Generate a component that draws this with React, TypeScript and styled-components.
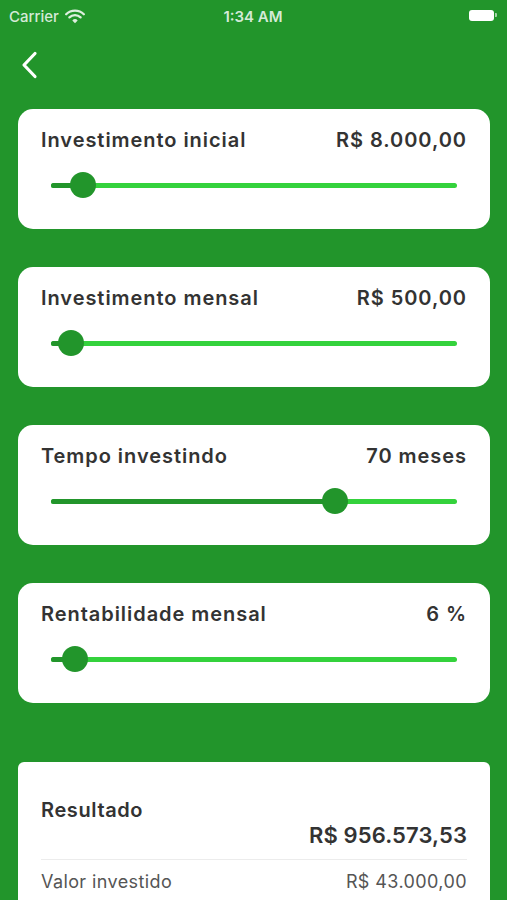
import styled, { createGlobalStyle } from "styled-components";

const GlobalStyle = createGlobalStyle`
    html, body {
        margin: 0;
        padding: 0;
        background: #22952b;
        overflow: hidden;
    }
    * { box-sizing: border-box; }
`

const Screen = styled.div`
    width: 507px;
    height: 900px;
    background-color: #22952b;
    font-family: Inter, "Liberation Sans", sans-serif;
    overflow: hidden;
    display: flex;
    flex-direction: column;
    & > * { flex-shrink: 0; }
`

const StatusBar = styled.div`
    height: 30px;
    padding: 2px 10px 0 9px;
    display: grid;
    grid-template-columns: 1fr auto 1fr;
    align-items: center;
    color: rgba(255,255,255,0.82);
    font-size: 15px;
    font-weight: 500;
`

const Carrier = styled.div`
    display: flex;
    align-items: center;
    gap: 6px;
`

const Clock = styled.div`
    font-weight: 600;
`

const Battery = styled.div`
    justify-self: end;
    display: flex;
    align-items: center;
    gap: 1px;
    margin-top: -2px;
`

const BatteryBody = styled.div`
    width: 25px;
    height: 11px;
    border-radius: 3px;
    background: #ffffff;
`

const BatteryNub = styled.div`
    width: 2px;
    height: 4px;
    border-radius: 0 1px 1px 0;
    background: rgba(255,255,255,0.6);
`

const Header = styled.div`
    height: 79px;
    padding: 21px 0 0 20px;
`

const List = styled.div`
    display: flex;
    flex-direction: column;
    gap: 38px;
    padding: 0 17px 0 18px;
`

const Card = styled.div`
    background: #ffffff;
    border-radius: 15px;
    padding: 19px 23px 30px 23px;
    display: flex;
    flex-direction: column;
    gap: 19px;
`

const Row = styled.div`
    display: flex;
    justify-content: space-between;
    align-items: center;
    height: 24px;
    color: #333333;
    font-size: 20px;
    font-weight: 600;
    letter-spacing: 0.95px;
`

const Track = styled.div`
    position: relative;
    height: 28px;
    margin: 0 10px;
    display: flex;
    align-items: center;
`

const Rail = styled.div`
    flex: 1;
    height: 5px;
    border-radius: 3px;
    background: #34d23c;
`

const Fill = styled.div`
    position: absolute;
    left: 0;
    height: 5px;
    border-radius: 3px;
    background: #22952b;
`

const Thumb = styled.div`
    position: absolute;
    top: 1px;
    width: 26px;
    height: 26px;
    margin-left: -13px;
    border-radius: 50%;
    background: #22952b;
`

const ResultCard = styled.div`
    margin: 59px 17px 0 18px;
    background: #ffffff;
    border-radius: 6px;
    padding: 36px 23px 40px 23px;
`

const ResultTitle = styled.div`
    height: 24px;
    line-height: 24px;
    font-size: 20px;
    font-weight: 600;
    letter-spacing: 0.6px;
    color: #333333;
`

const ResultTotal = styled.div`
    text-align: right;
    height: 26px;
    line-height: 26px;
    font-size: 22px;
    font-weight: 600;
    letter-spacing: 0.1px;
    color: #333333;
    padding-bottom: 11px;
    border-bottom: 1px solid #ececec;
    box-sizing: content-box;
`

const DetailRow = styled.div`
    display: flex;
    justify-content: space-between;
    padding-top: 11px;
    font-size: 18px;
    letter-spacing: 0.4px;
    color: #555555;
`

function WifiIcon() {
    return (
        <svg width="20" height="15" viewBox="0 0 20 15">
            <path d="M1.2 5.2 A12.5 12.5 0 0 1 18.8 5.2" stroke="rgba(255,255,255,0.85)" strokeWidth="2.3" fill="none" strokeLinecap="round" />
            <path d="M4.4 8.4 A8 8 0 0 1 15.6 8.4" stroke="rgba(255,255,255,0.85)" strokeWidth="2.3" fill="none" strokeLinecap="round" />
            <path d="M10 14.2 L7.3 11.4 A3.8 3.8 0 0 1 12.7 11.4 Z" fill="rgba(255,255,255,0.85)" />
        </svg>
    );
}

function BackIcon() {
    return (
        <svg width="20" height="28" viewBox="0 0 20 28">
            <path d="M15 2.5 L4 14 L15 25.5" stroke="#ffffff" strokeWidth="3.2" fill="none" strokeLinecap="round" strokeLinejoin="round" />
        </svg>
    );
}

type Item = { label: string, value: string, frac: number };

const items: Item[] = [
    { label: "Investimento inicial", value: "R$ 8.000,00", frac: 0.079 },
    { label: "Investimento mensal", value: "R$ 500,00", frac: 0.049 },
    { label: "Tempo investindo", value: "70 meses", frac: 0.70 },
    { label: "Rentabilidade mensal", value: "6 %", frac: 0.059 },
];

function SliderCard({ item }: { item: Item }) {
    const pct = `${item.frac * 100}%`;
    return (
        <Card>
            <Row>
                <span>{item.label}</span>
                <span>{item.value}</span>
            </Row>
            <Track>
                <Rail />
                <Fill style={{ width: pct }} />
                <Thumb style={{ left: pct }} />
            </Track>
        </Card>
    );
}

export default function App() {
    return (
        <Screen>
            <GlobalStyle />
            <StatusBar>
                <Carrier>Carrier <WifiIcon /></Carrier>
                <Clock>1:34 AM</Clock>
                <Battery>
                    <BatteryBody />
                    <BatteryNub />
                </Battery>
            </StatusBar>
            <Header>
                <BackIcon />
            </Header>
            <List>
                {items.map((it) => (
                    <SliderCard key={it.label} item={it} />
                ))}
            </List>
            <ResultCard>
                <ResultTitle>Resultado</ResultTitle>
                <ResultTotal>R$ 956.573,53</ResultTotal>
                <DetailRow>
                    <span>Valor investido</span>
                    <span>R$ 43.000,00</span>
                </DetailRow>
            </ResultCard>
        </Screen>
    );
}
